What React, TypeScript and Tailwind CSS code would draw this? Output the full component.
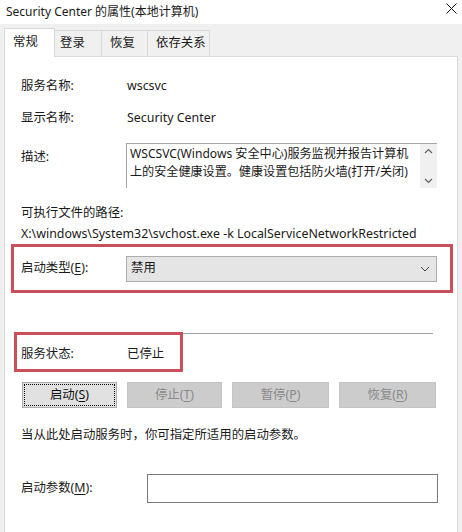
const font = { fontFamily: '"Noto Sans", "Noto Sans CJK SC", sans-serif' }

function Key({ k }: { k: string }) {
  return (
    <>
      (<span className="underline underline-offset-2">{k}</span>)
    </>
  )
}

function Btn({ label, k, w, enabled }: { label: string; k: string; w: string; enabled?: boolean }) {
  if (enabled) {
    return (
      <div className={`${w} h-[26px] bg-[#e1e1e1] border border-[#adadad] p-[1px]`}>
        <div className="h-full border border-dotted border-black flex items-center justify-center text-[12.4px] text-[#111]">
          {label}
          <Key k={k} />
        </div>
      </div>
    )
  }
  return (
    <div className={`${w} h-[26px] bg-[#cccccc] border border-[#c4c4c4] flex items-center justify-center text-[12.4px] text-[#8a8a8a]`}>
      {label}
      <Key k={k} />
    </div>
  )
}

export default function App() {
  return (
    <div className="w-[462px] h-[532px] bg-[#f0f0f0] flex flex-col overflow-hidden text-[#1a1a1a]" style={font}>
      {/* title bar */}
      <div className="h-[24px] bg-white flex items-center justify-between pl-[6px] pr-[5px] shrink-0">
        <span className="text-[12px] leading-none">Security Center 的属性(本地计算机)</span>
        <svg width="11" height="11" viewBox="0 0 11 11" className="-mt-[8px]">
          <path d="M0.5 0.5 L10.5 10.5 M10.5 0.5 L0.5 10.5" stroke="#111" strokeWidth="1" />
        </svg>
      </div>

      {/* tabs */}
      <div className="h-[32px] flex items-end pl-[4px] shrink-0 text-[12.4px]">
        <div className="h-[29px] w-[51px] bg-white border border-b-0 border-[#d9d9d9] pl-[8px] pt-[4px] relative top-[1px] z-10">
          常规
        </div>
        <div className="h-[26px] w-[47px] border-t border-r border-[#d9d9d9] flex items-center pl-[5px]">登录</div>
        <div className="h-[26px] w-[46px] border-t border-r border-[#d9d9d9] flex items-center pl-[8px]">恢复</div>
        <div className="h-[26px] w-[62px] border-t border-r border-[#d9d9d9] flex items-center pl-[8px]">依存关系</div>
      </div>

      {/* panel */}
      <div className="flex-1 ml-[4px] mr-[4px] bg-white border border-b-0 border-[#d9d9d9] text-[12.4px] flex flex-col">
        <div className="mt-[19px] h-[20px] flex items-center pl-[16px]">
          <span className="w-[106px]">服务名称:</span>
          <span>wscsvc</span>
        </div>
        <div className="mt-[12px] h-[20px] flex items-center pl-[16px]">
          <span className="w-[106px]">显示名称:</span>
          <span>Security Center</span>
        </div>
        <div className="mt-[15px] h-[45px] flex pl-[16px]">
          <span className="w-[105px] pt-[4px] leading-[20px]">描述:</span>
          <div className="w-[311px] h-[45px] border-t border-l border-[#a9a9a9] flex">
            <div className="flex-1 pl-[3px] pt-[1px] leading-[18px] text-[12.1px] overflow-hidden">
              <div className="whitespace-nowrap">WSCSVC(Windows 安全中心)服务监视并报告计算机</div>
              <div className="whitespace-nowrap">上的安全健康设置。健康设置包括防火墙(打开/关闭)</div>
            </div>
            <div className="w-[17px] bg-[#f0f0f0] flex flex-col items-center justify-between py-[4px]">
              <svg width="9" height="6" viewBox="0 0 9 6">
                <path d="M1 5 L4.5 1.5 L8 5" fill="none" stroke="#606060" strokeWidth="1.2" />
              </svg>
              <svg width="9" height="6" viewBox="0 0 9 6">
                <path d="M1 1 L4.5 4.5 L8 1" fill="none" stroke="#606060" strokeWidth="1.2" />
              </svg>
            </div>
          </div>
        </div>
        <div className="mt-[15px] h-[20px] flex items-center pl-[16px]">可执行文件的路径:</div>
        <div className="mt-[1px] h-[20px] flex items-center pl-[16px] whitespace-nowrap">
          X:\windows\System32\svchost.exe -k LocalServiceNetworkRestricted
        </div>

        {/* startup type, highlighted */}
        <div className="ml-[6px] w-[442px] h-[49px] border-[3px] border-[#c9505b] flex items-center pl-[7px]">
          <span className="w-[105px]">
            启动类型
            <Key k="E" />:
          </span>
          <div className="w-[311px] h-[26px] bg-[#e5e5e5] border border-[#adadad] flex items-center justify-between pl-[4px] pr-[6px]">
            <span>禁用</span>
            <svg width="10" height="6" viewBox="0 0 10 6">
              <path d="M1 1 L5 5 L9 1" fill="none" stroke="#444" strokeWidth="1" />
            </svg>
          </div>
        </div>

        {/* service status */}
        <div className="mt-[39px] flex items-start">
          <div className="ml-[9px] w-[169px] h-[40px] border-[3px] border-[#c9505b] flex items-center pl-[4px] pt-[4px]">
            <span className="w-[106px]">服务状态:</span>
            <span>已停止</span>
          </div>
          <div className="flex-1 mr-[24px] h-px bg-[#a0a0a0] mt-[1px]" />
        </div>

        <div className="mt-[10px] flex pl-[17px] gap-[10px]">
          <Btn label="启动" k="S" w="w-[95px]" enabled />
          <Btn label="停止" k="T" w="w-[95px]" />
          <Btn label="暂停" k="P" w="w-[97px]" />
          <Btn label="恢复" k="R" w="w-[97px]" />
        </div>

        <div className="mt-[17px] h-[20px] flex items-center pl-[16px]">当从此处启动服务时，你可指定所适用的启动参数。</div>

        <div className="mt-[29px] h-[29px] flex items-center pl-[16px]">
          <span className="w-[126px]">
            启动参数
            <Key k="M" />:
          </span>
          <div className="w-[291px] h-[29px] border border-[#7a7a7a] bg-white" />
        </div>
      </div>
    </div>
  )
}
